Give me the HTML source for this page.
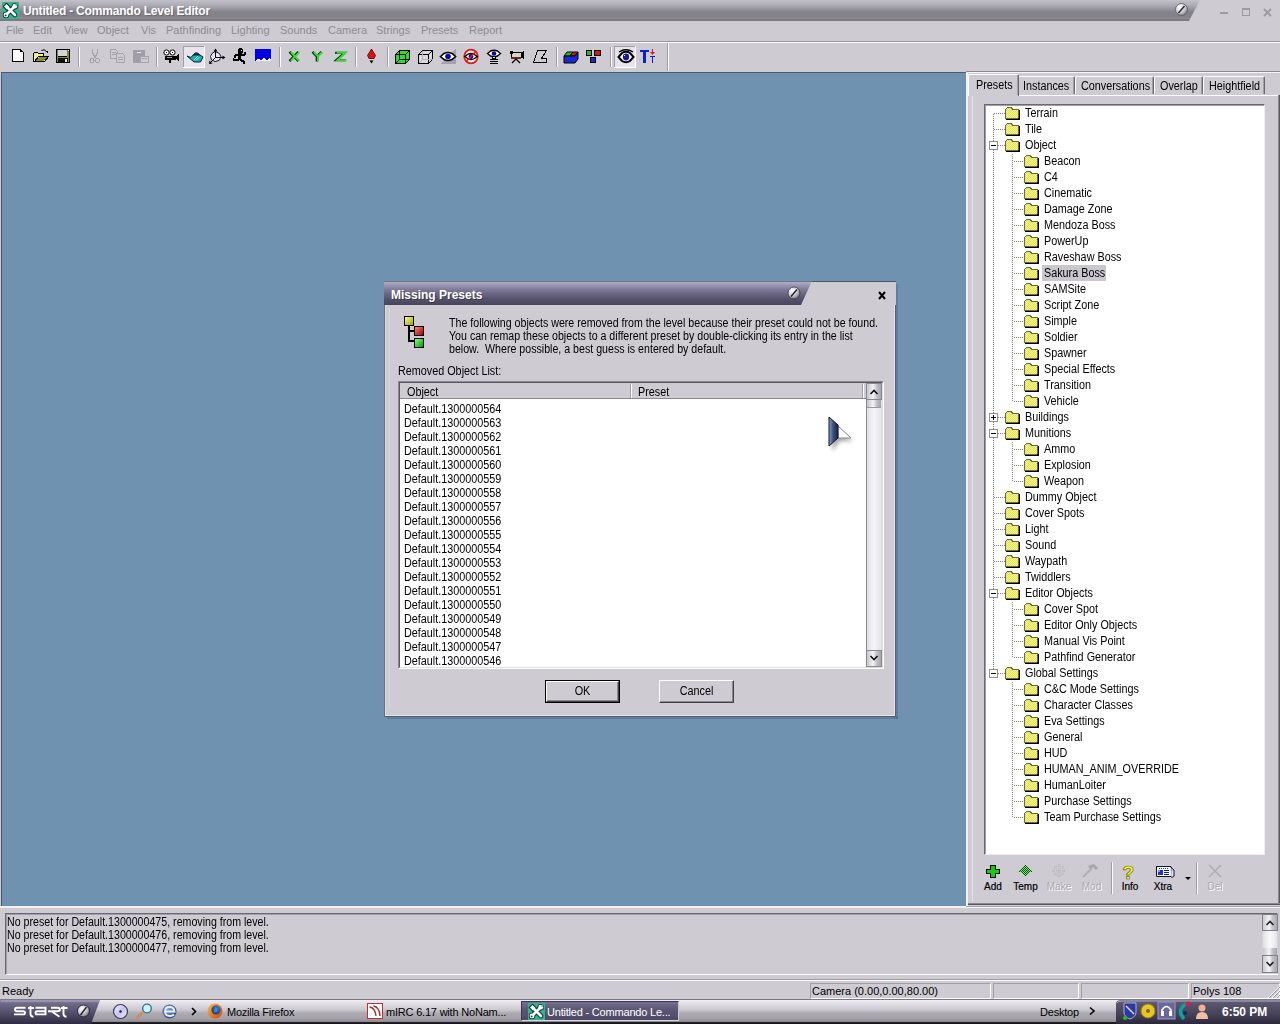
<!DOCTYPE html>
<html><head><meta charset="utf-8">
<style>
*{box-sizing:border-box}
html,body{margin:0;padding:0;width:1280px;height:1024px;overflow:hidden;background:#cecbd2;font-family:"Liberation Sans",sans-serif;font-size:11px;color:#000}
.a{position:absolute}
.t{position:absolute;white-space:nowrap;line-height:14px;font-size:12px;transform:scaleX(0.9);transform-origin:0 0}
.u{position:absolute;white-space:nowrap;line-height:14px;font-size:11px}
.m{position:absolute;top:23px;color:#8e8c94;white-space:nowrap;font-size:11px;line-height:14px}
.sep{position:absolute;top:47px;width:2px;height:20px;border-left:1px solid #a09ea6;border-right:1px solid #fff}
svg{position:absolute;overflow:visible}
</style></head><body>
<!-- TITLE BAR -->
<svg style="left:0;top:0" width="1210" height="21"><defs><linearGradient id="tg" x1="0" y1="0" x2="0" y2="1"><stop offset="0" stop-color="#c2c0c8"/><stop offset="0.25" stop-color="#aeacb4"/><stop offset="0.57" stop-color="#838189"/><stop offset="0.8" stop-color="#858389"/><stop offset="0.87" stop-color="#8c8a90"/><stop offset="0.94" stop-color="#7a7880"/><stop offset="1" stop-color="#7a7880"/></linearGradient></defs><polygon points="0,0 1200,0 1189,21 0,21" fill="url(#tg)"/></svg>
<svg style="left:2px;top:2px" width="17" height="17" viewBox="0 0 17 17"><rect width="17" height="17" fill="#36b290"/>
<g stroke="#0a3a30" stroke-width="4.6" stroke-linecap="round" fill="none"><path d="M4.5 12.5 L12.5 4.5 M5 5 L13 13"/></g>
<circle cx="4" cy="13" r="3.2" fill="#0a3a30"/><circle cx="12.8" cy="4.2" r="3.2" fill="#0a3a30"/><path d="M1.5 4.5 L4.5 1.5 L8 5 L5 8 Z" fill="#0a3a30" stroke="#0a3a30" stroke-width="1.6" stroke-linejoin="round"/>
<g stroke="#fff" stroke-width="2.6" stroke-linecap="round" fill="none"><path d="M4.5 12.5 L12.5 4.5 M5 5 L13 13"/></g>
<circle cx="4" cy="13" r="2.4" fill="#fff"/><circle cx="12.8" cy="4.2" r="2.4" fill="#fff"/><path d="M2 4.5 L4.5 2 L7.5 5 L5 7.5 Z" fill="#fff"/>
<circle cx="3.6" cy="13.4" r="0.9" fill="#0a3a30"/><path d="M13.5 3.5 L15.5 1.5" stroke="#36b290" stroke-width="1.6"/>
</svg>
<div class="u" style="left:23px;top:4px;font-size:12px;font-weight:bold;color:#fff;letter-spacing:-0.2px;line-height:15px;text-shadow:1px 1px 0 rgba(60,58,70,0.35)">Untitled - Commando Level Editor</div>
<svg style="left:1175px;top:3px" width="13" height="13"><defs><radialGradient id="scr" cx="0.35" cy="0.3" r="0.8"><stop offset="0" stop-color="#fff"/><stop offset="0.6" stop-color="#c8c8cc"/><stop offset="1" stop-color="#6a6870"/></radialGradient></defs><circle cx="6.5" cy="6.5" r="6" fill="url(#scr)" stroke="#58565e" stroke-width="0.8"/><path d="M3.5 10 L9.5 3" stroke="#2a2830" stroke-width="1.4"/></svg>
<div class="a" style="left:1220px;top:12px;width:8px;height:2px;background:#9c9aa2"></div>
<div class="a" style="left:1242px;top:8px;width:8px;height:8px;border:1px solid #9c9aa2;border-top-width:2px"></div>
<svg style="left:1263px;top:8px" width="9" height="9"><path d="M1 1 L8 8 M8 1 L1 8" stroke="#9c9aa2" stroke-width="1.8"/></svg>

<!-- MENU -->
<div class="m" style="left:6px">File</div>
<div class="m" style="left:33px">Edit</div>
<div class="m" style="left:64px">View</div>
<div class="m" style="left:97px">Object</div>
<div class="m" style="left:141px">Vis</div>
<div class="m" style="left:166px">Pathfinding</div>
<div class="m" style="left:231px">Lighting</div>
<div class="m" style="left:280px">Sounds</div>
<div class="m" style="left:328px">Camera</div>
<div class="m" style="left:376px">Strings</div>
<div class="m" style="left:421px">Presets</div>
<div class="m" style="left:469px">Report</div>
<div class="a" style="left:0;top:41px;width:1280px;height:1px;background:#9896a0"></div>
<div class="a" style="left:0;top:42px;width:1280px;height:1px;background:#fff"></div>

<!-- TOOLBAR -->
<svg style="left:0;top:43px" width="700" height="28" viewBox="0 43 700 28" shape-rendering="crispEdges">
<!-- new doc -->
<path d="M12.5 49.5 H20.5 L23.5 52.5 V61.5 H12.5 Z" fill="#fff" stroke="#000"/>
<rect x="20" y="50" width="2" height="2" fill="#000"/>
<!-- open -->
<path d="M33.5 52.5 H37.5 L38.5 53.5 H43.5 V56.5" fill="#f2ee8a" stroke="#000"/>
<rect x="34" y="54" width="9" height="7" fill="#f2ee8a"/>
<path d="M33.5 52.5 V61.5 H44.5 L48.5 56.5 H38.5 L34.5 61.5" fill="none" stroke="#000"/>
<path d="M35 61 L39 57 H47 L44 61 Z" fill="#8e8e1e"/>
<path d="M41.5 50.5 Q44 48.5 46.5 51.5" fill="none" stroke="#000" shape-rendering="auto"/>
<path d="M45 51 H48 V53 Z" fill="#000"/>
<!-- save -->
<rect x="56.5" y="49.5" width="13" height="13" fill="#7e8a2e" stroke="#000"/>
<rect x="58" y="50" width="9" height="6" fill="#d4d4dc"/>
<rect x="58" y="56" width="9" height="1" fill="#000"/>
<rect x="58" y="58" width="10" height="4" fill="#111"/>
<rect x="65" y="59" width="2" height="3" fill="#e8e8e0"/>
<rect x="68" y="50" width="1" height="1" fill="#fff"/>
<!-- sep -->
<rect x="78" y="47" width="1" height="20" fill="#a09ea6"/><rect x="79" y="47" width="1" height="20" fill="#fff"/>
<!-- cut disabled -->
<path d="M92.5 49 V53 L95 57 L97.5 53 V49" fill="none" stroke="#a4a2aa" stroke-width="1.2"/>
<circle cx="92" cy="60.5" r="2" fill="none" stroke="#a4a2aa" stroke-width="1.2"/>
<circle cx="97.5" cy="60.5" r="2" fill="none" stroke="#a4a2aa" stroke-width="1.2"/>
<path d="M94 58 L95 57 L96 58" stroke="#a4a2aa" fill="none"/>
<!-- copy disabled -->
<path d="M110.5 49.5 H115.5 L117.5 51.5 V58.5 H110.5 Z" fill="none" stroke="#a4a2aa"/>
<rect x="112" y="52" width="4" height="1" fill="#a4a2aa"/><rect x="112" y="54" width="4" height="1" fill="#a4a2aa"/>
<path d="M116.5 53.5 H122.5 L124.5 55.5 V62.5 H116.5 Z" fill="#cecbd2" stroke="#a4a2aa"/>
<rect x="118" y="57" width="5" height="1" fill="#a4a2aa"/><rect x="118" y="59" width="5" height="1" fill="#a4a2aa"/>
<!-- paste disabled -->
<rect x="133" y="50" width="12" height="13" fill="#a09ea8"/>
<rect x="137" y="52" width="4" height="1" fill="#e6e6ea"/>
<rect x="140.5" y="56.5" width="8" height="6" fill="#cecbd2" stroke="#a4a2aa"/>
<rect x="142" y="58" width="5" height="1" fill="#a4a2aa"/>
<!-- sep -->
<rect x="156" y="47" width="1" height="20" fill="#a09ea6"/><rect x="157" y="47" width="1" height="20" fill="#fff"/>
<!-- camera -->
<circle cx="166.5" cy="52.5" r="2.6" fill="#fff" stroke="#000" stroke-width="1" shape-rendering="auto"/>
<circle cx="172.5" cy="52.5" r="2.6" fill="#fff" stroke="#000" stroke-width="1" shape-rendering="auto"/>
<rect x="166" y="52" width="1" height="1" fill="#000"/><rect x="172" y="52" width="1" height="1" fill="#000"/>
<rect x="165" y="56" width="11" height="4" fill="#000"/>
<rect x="167" y="57" width="5" height="1" fill="#9a98a0"/>
<path d="M175 56 L178 55 V60 L175 59 Z" fill="#000"/><rect x="178" y="54" width="1" height="7" fill="#000"/>
<rect x="169" y="60" width="2" height="3" fill="#000"/>
<!-- teapot pressed -->
<rect x="183" y="46" width="22" height="22" fill="#e8e6ec"/>
<rect x="183" y="46" width="22" height="1" fill="#a09ea6"/><rect x="183" y="46" width="1" height="22" fill="#a09ea6"/>
<rect x="183" y="67" width="22" height="1" fill="#fff"/><rect x="204" y="46" width="1" height="22" fill="#fff"/>
<path d="M187 56 L191 57.5 L193 55 H200 L203 57 L200.5 62 H194 Z" fill="#28a8a8" stroke="#06283a" stroke-width="1" shape-rendering="auto"/>
<path d="M193.5 54.5 Q196 51 199.5 54.5 Z" fill="#1a3a7a" stroke="#06283a" stroke-width="1" shape-rendering="auto"/>
<path d="M194 60 L198 56 M196 60.5 L199.5 57" stroke="#70f0f0" stroke-width="1" shape-rendering="auto"/>
<!-- axis -->
<path d="M212 53.5 L215 51.5 L219.5 53.5 L221 57 L219 60.5 L215 61.5 L211.5 60 L210.5 56.5 Z" fill="#e8e6f0" stroke="#1a1a30" stroke-width="1" shape-rendering="auto"/>
<path d="M215.5 50 V57.5 H224 M215.5 57.5 L210 63" stroke="#000" stroke-width="1" fill="none" shape-rendering="auto"/>
<path d="M215.5 48.5 L213.5 51.5 H217.5 Z M225.5 57.5 L222.5 55.5 V59.5 Z M209 64 L209.5 60.5 L212.5 63.5 Z" fill="#000" shape-rendering="auto"/>
<!-- running man -->
<g fill="#000">
<rect x="238" y="49" width="5" height="4"/><rect x="239" y="48" width="3" height="6"/>
<rect x="238" y="53" width="3" height="7"/>
<rect x="235" y="54" width="10" height="2"/>
<rect x="234" y="55" width="2" height="3"/>
<rect x="244" y="52" width="2" height="3"/>
<rect x="233" y="59" width="6" height="2"/><rect x="233" y="58" width="1" height="2"/>
<rect x="240" y="59" width="2" height="2"/><rect x="241" y="60" width="3" height="2"/><rect x="243" y="61" width="2" height="3"/>
</g><rect x="241" y="50" width="1" height="1" fill="#fff"/>
<!-- blue shape -->
<path d="M255 49 H271 V59 L269 58 L267 60 L264 58 L261 60 L258 59 L255 61 Z" fill="#0000e0"/>
<path d="M255 61 L258 59 L261 60 L264 58 L267 60 L269 58 L271 59 V61 Z" fill="#f4f4f4"/>
<!-- sep -->
<rect x="279" y="47" width="1" height="20" fill="#a09ea6"/><rect x="280" y="47" width="1" height="20" fill="#fff"/>
<!-- X Y Z -->
<g fill="none" shape-rendering="auto" stroke-linecap="square">
<path d="M290.3 52.8 L297.5 60.2 M297.5 52.8 L290.3 60.2" stroke="#0a300a" stroke-width="2.4"/>
<path d="M291.5 52.8 L298.6 60.2 M298.6 52.8 L291.5 60.2" stroke="#3ad83a" stroke-width="2"/>
<path d="M313.3 52.8 L316.9 56.5 L320.5 52.8 M316.9 56.5 V60.2" stroke="#0a300a" stroke-width="2.4"/>
<path d="M314.5 52.8 L318 56.4 L321.6 52.8 M318 56.5 V60.2" stroke="#3ad83a" stroke-width="2"/>
<path d="M336.3 52.8 H344.5 L336.3 60.2 H344.5" stroke="#0a300a" stroke-width="2.3"/>
<path d="M337.5 52.8 H345.5 L337.5 60.2 H345.5" stroke="#3ad83a" stroke-width="1.9"/>
</g>
<!-- sep -->
<rect x="355" y="47" width="1" height="20" fill="#a09ea6"/><rect x="356" y="47" width="1" height="20" fill="#fff"/>
<!-- red drop -->
<path d="M371.5 49 L375.5 55.5 L374 58.5 H369 L367.5 55.5 Z" fill="#e01010" stroke="#400" stroke-width="0.8" shape-rendering="auto"/>
<path d="M369.5 60.5 H373.5 L371.5 63.5 Z" fill="#000" shape-rendering="auto"/>
<!-- sep -->
<rect x="387" y="47" width="1" height="20" fill="#a09ea6"/><rect x="388" y="47" width="1" height="20" fill="#fff"/>
<!-- green cube -->
<path d="M395.5 54.5 L399.5 50.5 H409.5 V59.5 L405.5 63.5 H395.5 Z" fill="#28e028" stroke="#000" stroke-width="1.2"/>
<path d="M395.5 54.5 H405.5 V63.5 M405.5 54.5 L409.5 50.5 M399.5 50.5 V59.5 H409.5 M399.5 59.5 L395.5 63.5" fill="none" stroke="#000" stroke-width="1"/>
<!-- white cube -->
<path d="M418.5 54.5 L422.5 50.5 H432.5 V59.5 L428.5 63.5 H418.5 Z" fill="#dcdae0" stroke="#000" stroke-width="1.2"/>
<path d="M418.5 54.5 H428.5 V63.5 M428.5 54.5 L432.5 50.5" fill="none" stroke="#000" stroke-width="1"/>
<path d="M422.5 50.5 V59.5 H432.5 M422.5 59.5 L418.5 63.5" fill="none" stroke="#b0b0b0" stroke-width="1"/>
<!-- eye gray triangle -->
<path d="M456 49 V64 H440 Z" fill="#a4a2aa"/>
<path d="M440.5 56.5 L444 53.5 Q448 51.5 452 53.5 L455.5 56.5 L452 59.5 Q448 61.5 444 59.5 Z" fill="#fff" stroke="#000" stroke-width="1.6" shape-rendering="auto"/>
<ellipse cx="448" cy="56.5" rx="2.8" ry="2.8" fill="#0a0aa8" shape-rendering="auto"/>
<!-- eye red circle -->
<circle cx="471" cy="56.5" r="6.8" fill="#f0f0f0" stroke="#e01818" stroke-width="1.8" shape-rendering="auto"/>
<path d="M465 56.5 L467.5 54.5 Q471 52.5 474.5 54.5 L477 56.5 L474.5 58.5 Q471 60.5 467.5 58.5 Z" fill="#fff" stroke="#000" stroke-width="1.4" shape-rendering="auto"/>
<ellipse cx="471" cy="56.5" rx="2.4" ry="2.4" fill="#0a0aa8" shape-rendering="auto"/>
<path d="M466.5 61 L475.5 52" stroke="#e01818" stroke-width="1.6" shape-rendering="auto"/>
<!-- eye stack -->
<path d="M487.5 53.5 L490.5 51 Q494 49.5 497.5 51 L500.5 53.5 L497.5 56 Q494 57.5 490.5 56 Z" fill="#fff" stroke="#000" stroke-width="1.4" shape-rendering="auto"/>
<ellipse cx="494" cy="53.5" rx="2.3" ry="2.3" fill="#0a0aa8" shape-rendering="auto"/>
<rect x="492" y="56" width="4" height="3" fill="#000"/><rect x="493" y="57" width="2" height="1" fill="#fff"/>
<rect x="490" y="59" width="8" height="1" fill="#000"/><rect x="490" y="61" width="8" height="1" fill="#000"/><rect x="490" y="63" width="8" height="1" fill="#000"/>
<!-- tripod camera -->
<rect x="511" y="52" width="10" height="5" fill="#d8d4c8" stroke="#000"/>
<rect x="510" y="51" width="3" height="3" fill="#000"/>
<path d="M521 53 L524 51 V59 L521 57 Z" fill="#000"/>
<rect x="511" y="57" width="10" height="2" fill="#6a2a1a"/>
<path d="M516 59 L512 63 M516 59 L520 63" stroke="#000" stroke-width="1.2" shape-rendering="auto"/>
<!-- Z outline -->
<path d="M537.5 50.5 H546.5 L541.5 58.5 H546.5 V62.5 H533.5 Z" fill="none" stroke="#000" stroke-width="1.1"/>
<!-- sep -->
<rect x="556" y="47" width="1" height="20" fill="#a09ea6"/><rect x="557" y="47" width="1" height="20" fill="#fff"/>
<!-- RGB cube -->
<path d="M564 56 L567 52 H573 L570 56 Z" fill="#20c020" stroke="#000" shape-rendering="auto"/>
<path d="M570 56 L573 52 H578 L575 56 Z" fill="#d01818" stroke="#000" shape-rendering="auto"/>
<path d="M564 56 H575 L578 52 V59 L575 63 H564 Z" fill="#1a2ad0" stroke="#000" shape-rendering="auto"/>
<!-- 3 squares -->
<rect x="586.5" y="50.5" width="5" height="5" fill="#20c020" stroke="#000"/>
<rect x="594.5" y="50.5" width="6" height="5" fill="#d01818" stroke="#000"/>
<rect x="590.5" y="57.5" width="5" height="5" fill="#1a2ad0" stroke="#000"/>
<!-- sep -->
<rect x="610" y="47" width="1" height="20" fill="#a09ea6"/><rect x="611" y="47" width="1" height="20" fill="#fff"/>
<!-- eye pressed -->
<rect x="614" y="46" width="22" height="22" fill="#e6e4ea"/>
<rect x="614" y="46" width="22" height="1" fill="#a09ea6"/><rect x="614" y="46" width="1" height="22" fill="#a09ea6"/>
<rect x="614" y="67" width="22" height="1" fill="#fff"/><rect x="635" y="46" width="1" height="22" fill="#fff"/>
<path d="M618.5 57 L622 53 Q626 50.5 630 53 L633.5 57 L630 61 Q626 63.5 622 61 Z" fill="#fff" stroke="#000" stroke-width="2" shape-rendering="auto"/>
<path d="M619 52 Q626 47.5 633 52" fill="none" stroke="#000" stroke-width="1.4" shape-rendering="auto"/>
<ellipse cx="626" cy="57" rx="3.2" ry="3.4" fill="#1a1aa0" shape-rendering="auto"/>
<rect x="624" y="55" width="1" height="1" fill="#fff"/>
<!-- T -->
<rect x="640" y="50" width="9" height="2" fill="#0a20d0"/><rect x="643" y="50" width="3" height="13" fill="#0a20d0"/>
<rect x="652" y="49" width="1" height="3" fill="#e01818"/><path d="M650 52 H655 L652.5 55 Z" fill="#e01818" shape-rendering="auto"/>
<rect x="650" y="56" width="5" height="1" fill="#0a20d0"/><rect x="652" y="56" width="1" height="7" fill="#0a20d0"/>
<!-- end line -->
<rect x="667" y="43" width="1" height="28" fill="#a09ea6"/><rect x="668" y="43" width="1" height="28" fill="#fff"/>
</svg>

<!-- VIEWPORT -->
<div class="a" style="left:1px;top:72px;width:965px;height:834px;border-left:1px solid #4e5a6a;border-top:1px solid #4e5a6a;background:#7092b1"></div>
<div class="a" style="left:0;top:906px;width:967px;height:2px;background:#f2f2f8"></div>
<!-- RIGHT PANEL -->
<div class="a" style="left:966px;top:71px;width:314px;height:836px;background:#cecbd2"></div>
<div class="a" style="left:966px;top:71px;width:314px;height:1px;background:#8a8890"></div>
<div class="a" style="left:966px;top:72px;width:314px;height:1px;background:#f6f6fa"></div>
<div class="a" style="left:966px;top:72px;width:2px;height:836px;background:#f2f2f8"></div>
<div class="a" style="left:966px;top:906px;width:314px;height:1px;background:#a4a2aa"></div>
<div class="a" style="left:966px;top:907px;width:314px;height:1px;background:#f6f6fa"></div>
<div class="a" style="left:968px;top:95px;width:312px;height:1px;background:#fff"></div>
<div class="a" style="left:972px;top:96px;width:1px;height:806px;background:#e4e2e8"></div>
<div class="a" style="left:1278px;top:95px;width:1px;height:809px;background:#8a8890"></div>
<div class="a" style="left:1279px;top:95px;width:1px;height:810px;background:#5a5860"></div>
<div class="a" style="left:968px;top:903px;width:312px;height:1px;background:#8a8890"></div>
<div class="a" style="left:968px;top:904px;width:312px;height:1px;background:#5a5860"></div>
<div class="a" style="left:1018px;top:76px;width:57px;height:18px;background:#cecbd2;border-left:1px solid #fff;border-top:1px solid #fff;border-right:1px solid #6a6870;border-radius:2px 2px 0 0"></div>
<div class="a" style="left:1073px;top:77px;width:1px;height:17px;background:#a09ea6"></div>
<div class="t" style="left:1023px;top:79px">Instances</div>
<div class="a" style="left:1075px;top:76px;width:79px;height:18px;background:#cecbd2;border-left:1px solid #fff;border-top:1px solid #fff;border-right:1px solid #6a6870;border-radius:2px 2px 0 0"></div>
<div class="a" style="left:1152px;top:77px;width:1px;height:17px;background:#a09ea6"></div>
<div class="t" style="left:1081px;top:79px">Conversations</div>
<div class="a" style="left:1154px;top:76px;width:49px;height:18px;background:#cecbd2;border-left:1px solid #fff;border-top:1px solid #fff;border-right:1px solid #6a6870;border-radius:2px 2px 0 0"></div>
<div class="a" style="left:1201px;top:77px;width:1px;height:17px;background:#a09ea6"></div>
<div class="t" style="left:1160px;top:79px">Overlap</div>
<div class="a" style="left:1203px;top:76px;width:62px;height:18px;background:#cecbd2;border-left:1px solid #fff;border-top:1px solid #fff;border-right:1px solid #6a6870;border-radius:2px 2px 0 0"></div>
<div class="a" style="left:1263px;top:77px;width:1px;height:17px;background:#a09ea6"></div>
<div class="t" style="left:1209px;top:79px">Heightfield</div>
<div class="a" style="left:968px;top:74px;width:51px;height:22px;background:#cecbd2;border-left:1px solid #fff;border-top:1px solid #fff;border-right:1px solid #6a6870;border-radius:2px 2px 0 0"></div>
<div class="a" style="left:1017px;top:75px;width:1px;height:20px;background:#a09ea6"></div>
<div class="t" style="left:976px;top:78px">Presets</div>
<div class="a" style="left:984px;top:104px;width:281px;height:751px;background:#fff;border-left:1px solid #6a6870;border-top:1px solid #6a6870;border-right:1px solid #f0eef4;border-bottom:1px solid #f0eef4"></div>
<div class="a" style="left:985px;top:105px;width:279px;height:749px;border-left:1px solid #a09ea6;border-top:1px solid #a09ea6"></div>
<svg style="left:984px;top:104px" width="280" height="751" viewBox="984 104 280 751" shape-rendering="crispEdges">
<defs><pattern id="dotv" width="1" height="2" patternUnits="userSpaceOnUse"><rect width="1" height="1" fill="#808080"/></pattern><pattern id="doth" width="2" height="1" patternUnits="userSpaceOnUse"><rect width="1" height="1" fill="#808080"/></pattern><pattern id="dith" width="2" height="2" patternUnits="userSpaceOnUse"><rect width="2" height="2" fill="#f4f490"/><rect width="1" height="1" fill="#e0e058"/><rect x="1" y="1" width="1" height="1" fill="#e0e058"/></pattern></defs>
<rect x="993" y="113" width="1" height="561" fill="url(#dotv)"/>
<rect x="1012" y="153" width="1" height="249" fill="url(#dotv)"/>
<rect x="1012" y="441" width="1" height="41" fill="url(#dotv)"/>
<rect x="1012" y="601" width="1" height="57" fill="url(#dotv)"/>
<rect x="1012" y="681" width="1" height="137" fill="url(#dotv)"/>
<rect x="994" y="113" width="11" height="1" fill="url(#doth)"/>
<g transform="translate(1005 107)"><path d="M0.5 3.5 Q0.5 1.5 2 1 L2.5 0.5 H5.5 Q6.5 0.5 7 1.5 L7.5 2.5 H12.5 Q13.5 2.5 13.5 3.5 V11.5 H0.5 Z" fill="url(#dith)" stroke="#6a6a38" stroke-width="1"/><rect x="14" y="3" width="1" height="10" fill="#000"/><rect x="1" y="12" width="14" height="1" fill="#000"/><rect x="13" y="11" width="1" height="1" fill="#000"/></g>
<rect x="994" y="129" width="11" height="1" fill="url(#doth)"/>
<g transform="translate(1005 123)"><path d="M0.5 3.5 Q0.5 1.5 2 1 L2.5 0.5 H5.5 Q6.5 0.5 7 1.5 L7.5 2.5 H12.5 Q13.5 2.5 13.5 3.5 V11.5 H0.5 Z" fill="url(#dith)" stroke="#6a6a38" stroke-width="1"/><rect x="14" y="3" width="1" height="10" fill="#000"/><rect x="1" y="12" width="14" height="1" fill="#000"/><rect x="13" y="11" width="1" height="1" fill="#000"/></g>
<rect x="994" y="145" width="11" height="1" fill="url(#doth)"/>
<g transform="translate(1005 139)"><path d="M0.5 3.5 Q0.5 1.5 2 1 L2.5 0.5 H5.5 Q6.5 0.5 7 1.5 L7.5 2.5 H12.5 Q13.5 2.5 13.5 3.5 V11.5 H0.5 Z" fill="url(#dith)" stroke="#6a6a38" stroke-width="1"/><rect x="14" y="3" width="1" height="10" fill="#000"/><rect x="1" y="12" width="14" height="1" fill="#000"/><rect x="13" y="11" width="1" height="1" fill="#000"/></g>
<rect x="989" y="141" width="9" height="9" fill="#fff"/><rect x="989.5" y="141.5" width="8" height="8" fill="none" stroke="#909090"/>
<rect x="991" y="145" width="5" height="1" fill="#000"/>
<rect x="1013" y="161" width="11" height="1" fill="url(#doth)"/>
<g transform="translate(1024 155)"><path d="M0.5 3.5 Q0.5 1.5 2 1 L2.5 0.5 H5.5 Q6.5 0.5 7 1.5 L7.5 2.5 H12.5 Q13.5 2.5 13.5 3.5 V11.5 H0.5 Z" fill="url(#dith)" stroke="#6a6a38" stroke-width="1"/><rect x="14" y="3" width="1" height="10" fill="#000"/><rect x="1" y="12" width="14" height="1" fill="#000"/><rect x="13" y="11" width="1" height="1" fill="#000"/></g>
<rect x="1013" y="177" width="11" height="1" fill="url(#doth)"/>
<g transform="translate(1024 171)"><path d="M0.5 3.5 Q0.5 1.5 2 1 L2.5 0.5 H5.5 Q6.5 0.5 7 1.5 L7.5 2.5 H12.5 Q13.5 2.5 13.5 3.5 V11.5 H0.5 Z" fill="url(#dith)" stroke="#6a6a38" stroke-width="1"/><rect x="14" y="3" width="1" height="10" fill="#000"/><rect x="1" y="12" width="14" height="1" fill="#000"/><rect x="13" y="11" width="1" height="1" fill="#000"/></g>
<rect x="1013" y="193" width="11" height="1" fill="url(#doth)"/>
<g transform="translate(1024 187)"><path d="M0.5 3.5 Q0.5 1.5 2 1 L2.5 0.5 H5.5 Q6.5 0.5 7 1.5 L7.5 2.5 H12.5 Q13.5 2.5 13.5 3.5 V11.5 H0.5 Z" fill="url(#dith)" stroke="#6a6a38" stroke-width="1"/><rect x="14" y="3" width="1" height="10" fill="#000"/><rect x="1" y="12" width="14" height="1" fill="#000"/><rect x="13" y="11" width="1" height="1" fill="#000"/></g>
<rect x="1013" y="209" width="11" height="1" fill="url(#doth)"/>
<g transform="translate(1024 203)"><path d="M0.5 3.5 Q0.5 1.5 2 1 L2.5 0.5 H5.5 Q6.5 0.5 7 1.5 L7.5 2.5 H12.5 Q13.5 2.5 13.5 3.5 V11.5 H0.5 Z" fill="url(#dith)" stroke="#6a6a38" stroke-width="1"/><rect x="14" y="3" width="1" height="10" fill="#000"/><rect x="1" y="12" width="14" height="1" fill="#000"/><rect x="13" y="11" width="1" height="1" fill="#000"/></g>
<rect x="1013" y="225" width="11" height="1" fill="url(#doth)"/>
<g transform="translate(1024 219)"><path d="M0.5 3.5 Q0.5 1.5 2 1 L2.5 0.5 H5.5 Q6.5 0.5 7 1.5 L7.5 2.5 H12.5 Q13.5 2.5 13.5 3.5 V11.5 H0.5 Z" fill="url(#dith)" stroke="#6a6a38" stroke-width="1"/><rect x="14" y="3" width="1" height="10" fill="#000"/><rect x="1" y="12" width="14" height="1" fill="#000"/><rect x="13" y="11" width="1" height="1" fill="#000"/></g>
<rect x="1013" y="241" width="11" height="1" fill="url(#doth)"/>
<g transform="translate(1024 235)"><path d="M0.5 3.5 Q0.5 1.5 2 1 L2.5 0.5 H5.5 Q6.5 0.5 7 1.5 L7.5 2.5 H12.5 Q13.5 2.5 13.5 3.5 V11.5 H0.5 Z" fill="url(#dith)" stroke="#6a6a38" stroke-width="1"/><rect x="14" y="3" width="1" height="10" fill="#000"/><rect x="1" y="12" width="14" height="1" fill="#000"/><rect x="13" y="11" width="1" height="1" fill="#000"/></g>
<rect x="1013" y="257" width="11" height="1" fill="url(#doth)"/>
<g transform="translate(1024 251)"><path d="M0.5 3.5 Q0.5 1.5 2 1 L2.5 0.5 H5.5 Q6.5 0.5 7 1.5 L7.5 2.5 H12.5 Q13.5 2.5 13.5 3.5 V11.5 H0.5 Z" fill="url(#dith)" stroke="#6a6a38" stroke-width="1"/><rect x="14" y="3" width="1" height="10" fill="#000"/><rect x="1" y="12" width="14" height="1" fill="#000"/><rect x="13" y="11" width="1" height="1" fill="#000"/></g>
<rect x="1013" y="273" width="11" height="1" fill="url(#doth)"/>
<g transform="translate(1024 267)"><path d="M0.5 3.5 Q0.5 1.5 2 1 L2.5 0.5 H5.5 Q6.5 0.5 7 1.5 L7.5 2.5 H12.5 Q13.5 2.5 13.5 3.5 V11.5 H0.5 Z" fill="url(#dith)" stroke="#6a6a38" stroke-width="1"/><rect x="14" y="3" width="1" height="10" fill="#000"/><rect x="1" y="12" width="14" height="1" fill="#000"/><rect x="13" y="11" width="1" height="1" fill="#000"/></g>
<rect x="1013" y="289" width="11" height="1" fill="url(#doth)"/>
<g transform="translate(1024 283)"><path d="M0.5 3.5 Q0.5 1.5 2 1 L2.5 0.5 H5.5 Q6.5 0.5 7 1.5 L7.5 2.5 H12.5 Q13.5 2.5 13.5 3.5 V11.5 H0.5 Z" fill="url(#dith)" stroke="#6a6a38" stroke-width="1"/><rect x="14" y="3" width="1" height="10" fill="#000"/><rect x="1" y="12" width="14" height="1" fill="#000"/><rect x="13" y="11" width="1" height="1" fill="#000"/></g>
<rect x="1013" y="305" width="11" height="1" fill="url(#doth)"/>
<g transform="translate(1024 299)"><path d="M0.5 3.5 Q0.5 1.5 2 1 L2.5 0.5 H5.5 Q6.5 0.5 7 1.5 L7.5 2.5 H12.5 Q13.5 2.5 13.5 3.5 V11.5 H0.5 Z" fill="url(#dith)" stroke="#6a6a38" stroke-width="1"/><rect x="14" y="3" width="1" height="10" fill="#000"/><rect x="1" y="12" width="14" height="1" fill="#000"/><rect x="13" y="11" width="1" height="1" fill="#000"/></g>
<rect x="1013" y="321" width="11" height="1" fill="url(#doth)"/>
<g transform="translate(1024 315)"><path d="M0.5 3.5 Q0.5 1.5 2 1 L2.5 0.5 H5.5 Q6.5 0.5 7 1.5 L7.5 2.5 H12.5 Q13.5 2.5 13.5 3.5 V11.5 H0.5 Z" fill="url(#dith)" stroke="#6a6a38" stroke-width="1"/><rect x="14" y="3" width="1" height="10" fill="#000"/><rect x="1" y="12" width="14" height="1" fill="#000"/><rect x="13" y="11" width="1" height="1" fill="#000"/></g>
<rect x="1013" y="337" width="11" height="1" fill="url(#doth)"/>
<g transform="translate(1024 331)"><path d="M0.5 3.5 Q0.5 1.5 2 1 L2.5 0.5 H5.5 Q6.5 0.5 7 1.5 L7.5 2.5 H12.5 Q13.5 2.5 13.5 3.5 V11.5 H0.5 Z" fill="url(#dith)" stroke="#6a6a38" stroke-width="1"/><rect x="14" y="3" width="1" height="10" fill="#000"/><rect x="1" y="12" width="14" height="1" fill="#000"/><rect x="13" y="11" width="1" height="1" fill="#000"/></g>
<rect x="1013" y="353" width="11" height="1" fill="url(#doth)"/>
<g transform="translate(1024 347)"><path d="M0.5 3.5 Q0.5 1.5 2 1 L2.5 0.5 H5.5 Q6.5 0.5 7 1.5 L7.5 2.5 H12.5 Q13.5 2.5 13.5 3.5 V11.5 H0.5 Z" fill="url(#dith)" stroke="#6a6a38" stroke-width="1"/><rect x="14" y="3" width="1" height="10" fill="#000"/><rect x="1" y="12" width="14" height="1" fill="#000"/><rect x="13" y="11" width="1" height="1" fill="#000"/></g>
<rect x="1013" y="369" width="11" height="1" fill="url(#doth)"/>
<g transform="translate(1024 363)"><path d="M0.5 3.5 Q0.5 1.5 2 1 L2.5 0.5 H5.5 Q6.5 0.5 7 1.5 L7.5 2.5 H12.5 Q13.5 2.5 13.5 3.5 V11.5 H0.5 Z" fill="url(#dith)" stroke="#6a6a38" stroke-width="1"/><rect x="14" y="3" width="1" height="10" fill="#000"/><rect x="1" y="12" width="14" height="1" fill="#000"/><rect x="13" y="11" width="1" height="1" fill="#000"/></g>
<rect x="1013" y="385" width="11" height="1" fill="url(#doth)"/>
<g transform="translate(1024 379)"><path d="M0.5 3.5 Q0.5 1.5 2 1 L2.5 0.5 H5.5 Q6.5 0.5 7 1.5 L7.5 2.5 H12.5 Q13.5 2.5 13.5 3.5 V11.5 H0.5 Z" fill="url(#dith)" stroke="#6a6a38" stroke-width="1"/><rect x="14" y="3" width="1" height="10" fill="#000"/><rect x="1" y="12" width="14" height="1" fill="#000"/><rect x="13" y="11" width="1" height="1" fill="#000"/></g>
<rect x="1013" y="401" width="11" height="1" fill="url(#doth)"/>
<g transform="translate(1024 395)"><path d="M0.5 3.5 Q0.5 1.5 2 1 L2.5 0.5 H5.5 Q6.5 0.5 7 1.5 L7.5 2.5 H12.5 Q13.5 2.5 13.5 3.5 V11.5 H0.5 Z" fill="url(#dith)" stroke="#6a6a38" stroke-width="1"/><rect x="14" y="3" width="1" height="10" fill="#000"/><rect x="1" y="12" width="14" height="1" fill="#000"/><rect x="13" y="11" width="1" height="1" fill="#000"/></g>
<rect x="994" y="417" width="11" height="1" fill="url(#doth)"/>
<g transform="translate(1005 411)"><path d="M0.5 3.5 Q0.5 1.5 2 1 L2.5 0.5 H5.5 Q6.5 0.5 7 1.5 L7.5 2.5 H12.5 Q13.5 2.5 13.5 3.5 V11.5 H0.5 Z" fill="url(#dith)" stroke="#6a6a38" stroke-width="1"/><rect x="14" y="3" width="1" height="10" fill="#000"/><rect x="1" y="12" width="14" height="1" fill="#000"/><rect x="13" y="11" width="1" height="1" fill="#000"/></g>
<rect x="989" y="413" width="9" height="9" fill="#fff"/><rect x="989.5" y="413.5" width="8" height="8" fill="none" stroke="#909090"/>
<rect x="991" y="417" width="5" height="1" fill="#000"/>
<rect x="993" y="415" width="1" height="5" fill="#000"/>
<rect x="994" y="433" width="11" height="1" fill="url(#doth)"/>
<g transform="translate(1005 427)"><path d="M0.5 3.5 Q0.5 1.5 2 1 L2.5 0.5 H5.5 Q6.5 0.5 7 1.5 L7.5 2.5 H12.5 Q13.5 2.5 13.5 3.5 V11.5 H0.5 Z" fill="url(#dith)" stroke="#6a6a38" stroke-width="1"/><rect x="14" y="3" width="1" height="10" fill="#000"/><rect x="1" y="12" width="14" height="1" fill="#000"/><rect x="13" y="11" width="1" height="1" fill="#000"/></g>
<rect x="989" y="429" width="9" height="9" fill="#fff"/><rect x="989.5" y="429.5" width="8" height="8" fill="none" stroke="#909090"/>
<rect x="991" y="433" width="5" height="1" fill="#000"/>
<rect x="1013" y="449" width="11" height="1" fill="url(#doth)"/>
<g transform="translate(1024 443)"><path d="M0.5 3.5 Q0.5 1.5 2 1 L2.5 0.5 H5.5 Q6.5 0.5 7 1.5 L7.5 2.5 H12.5 Q13.5 2.5 13.5 3.5 V11.5 H0.5 Z" fill="url(#dith)" stroke="#6a6a38" stroke-width="1"/><rect x="14" y="3" width="1" height="10" fill="#000"/><rect x="1" y="12" width="14" height="1" fill="#000"/><rect x="13" y="11" width="1" height="1" fill="#000"/></g>
<rect x="1013" y="465" width="11" height="1" fill="url(#doth)"/>
<g transform="translate(1024 459)"><path d="M0.5 3.5 Q0.5 1.5 2 1 L2.5 0.5 H5.5 Q6.5 0.5 7 1.5 L7.5 2.5 H12.5 Q13.5 2.5 13.5 3.5 V11.5 H0.5 Z" fill="url(#dith)" stroke="#6a6a38" stroke-width="1"/><rect x="14" y="3" width="1" height="10" fill="#000"/><rect x="1" y="12" width="14" height="1" fill="#000"/><rect x="13" y="11" width="1" height="1" fill="#000"/></g>
<rect x="1013" y="481" width="11" height="1" fill="url(#doth)"/>
<g transform="translate(1024 475)"><path d="M0.5 3.5 Q0.5 1.5 2 1 L2.5 0.5 H5.5 Q6.5 0.5 7 1.5 L7.5 2.5 H12.5 Q13.5 2.5 13.5 3.5 V11.5 H0.5 Z" fill="url(#dith)" stroke="#6a6a38" stroke-width="1"/><rect x="14" y="3" width="1" height="10" fill="#000"/><rect x="1" y="12" width="14" height="1" fill="#000"/><rect x="13" y="11" width="1" height="1" fill="#000"/></g>
<rect x="994" y="497" width="11" height="1" fill="url(#doth)"/>
<g transform="translate(1005 491)"><path d="M0.5 3.5 Q0.5 1.5 2 1 L2.5 0.5 H5.5 Q6.5 0.5 7 1.5 L7.5 2.5 H12.5 Q13.5 2.5 13.5 3.5 V11.5 H0.5 Z" fill="url(#dith)" stroke="#6a6a38" stroke-width="1"/><rect x="14" y="3" width="1" height="10" fill="#000"/><rect x="1" y="12" width="14" height="1" fill="#000"/><rect x="13" y="11" width="1" height="1" fill="#000"/></g>
<rect x="994" y="513" width="11" height="1" fill="url(#doth)"/>
<g transform="translate(1005 507)"><path d="M0.5 3.5 Q0.5 1.5 2 1 L2.5 0.5 H5.5 Q6.5 0.5 7 1.5 L7.5 2.5 H12.5 Q13.5 2.5 13.5 3.5 V11.5 H0.5 Z" fill="url(#dith)" stroke="#6a6a38" stroke-width="1"/><rect x="14" y="3" width="1" height="10" fill="#000"/><rect x="1" y="12" width="14" height="1" fill="#000"/><rect x="13" y="11" width="1" height="1" fill="#000"/></g>
<rect x="994" y="529" width="11" height="1" fill="url(#doth)"/>
<g transform="translate(1005 523)"><path d="M0.5 3.5 Q0.5 1.5 2 1 L2.5 0.5 H5.5 Q6.5 0.5 7 1.5 L7.5 2.5 H12.5 Q13.5 2.5 13.5 3.5 V11.5 H0.5 Z" fill="url(#dith)" stroke="#6a6a38" stroke-width="1"/><rect x="14" y="3" width="1" height="10" fill="#000"/><rect x="1" y="12" width="14" height="1" fill="#000"/><rect x="13" y="11" width="1" height="1" fill="#000"/></g>
<rect x="994" y="545" width="11" height="1" fill="url(#doth)"/>
<g transform="translate(1005 539)"><path d="M0.5 3.5 Q0.5 1.5 2 1 L2.5 0.5 H5.5 Q6.5 0.5 7 1.5 L7.5 2.5 H12.5 Q13.5 2.5 13.5 3.5 V11.5 H0.5 Z" fill="url(#dith)" stroke="#6a6a38" stroke-width="1"/><rect x="14" y="3" width="1" height="10" fill="#000"/><rect x="1" y="12" width="14" height="1" fill="#000"/><rect x="13" y="11" width="1" height="1" fill="#000"/></g>
<rect x="994" y="561" width="11" height="1" fill="url(#doth)"/>
<g transform="translate(1005 555)"><path d="M0.5 3.5 Q0.5 1.5 2 1 L2.5 0.5 H5.5 Q6.5 0.5 7 1.5 L7.5 2.5 H12.5 Q13.5 2.5 13.5 3.5 V11.5 H0.5 Z" fill="url(#dith)" stroke="#6a6a38" stroke-width="1"/><rect x="14" y="3" width="1" height="10" fill="#000"/><rect x="1" y="12" width="14" height="1" fill="#000"/><rect x="13" y="11" width="1" height="1" fill="#000"/></g>
<rect x="994" y="577" width="11" height="1" fill="url(#doth)"/>
<g transform="translate(1005 571)"><path d="M0.5 3.5 Q0.5 1.5 2 1 L2.5 0.5 H5.5 Q6.5 0.5 7 1.5 L7.5 2.5 H12.5 Q13.5 2.5 13.5 3.5 V11.5 H0.5 Z" fill="url(#dith)" stroke="#6a6a38" stroke-width="1"/><rect x="14" y="3" width="1" height="10" fill="#000"/><rect x="1" y="12" width="14" height="1" fill="#000"/><rect x="13" y="11" width="1" height="1" fill="#000"/></g>
<rect x="994" y="593" width="11" height="1" fill="url(#doth)"/>
<g transform="translate(1005 587)"><path d="M0.5 3.5 Q0.5 1.5 2 1 L2.5 0.5 H5.5 Q6.5 0.5 7 1.5 L7.5 2.5 H12.5 Q13.5 2.5 13.5 3.5 V11.5 H0.5 Z" fill="url(#dith)" stroke="#6a6a38" stroke-width="1"/><rect x="14" y="3" width="1" height="10" fill="#000"/><rect x="1" y="12" width="14" height="1" fill="#000"/><rect x="13" y="11" width="1" height="1" fill="#000"/></g>
<rect x="989" y="589" width="9" height="9" fill="#fff"/><rect x="989.5" y="589.5" width="8" height="8" fill="none" stroke="#909090"/>
<rect x="991" y="593" width="5" height="1" fill="#000"/>
<rect x="1013" y="609" width="11" height="1" fill="url(#doth)"/>
<g transform="translate(1024 603)"><path d="M0.5 3.5 Q0.5 1.5 2 1 L2.5 0.5 H5.5 Q6.5 0.5 7 1.5 L7.5 2.5 H12.5 Q13.5 2.5 13.5 3.5 V11.5 H0.5 Z" fill="url(#dith)" stroke="#6a6a38" stroke-width="1"/><rect x="14" y="3" width="1" height="10" fill="#000"/><rect x="1" y="12" width="14" height="1" fill="#000"/><rect x="13" y="11" width="1" height="1" fill="#000"/></g>
<rect x="1013" y="625" width="11" height="1" fill="url(#doth)"/>
<g transform="translate(1024 619)"><path d="M0.5 3.5 Q0.5 1.5 2 1 L2.5 0.5 H5.5 Q6.5 0.5 7 1.5 L7.5 2.5 H12.5 Q13.5 2.5 13.5 3.5 V11.5 H0.5 Z" fill="url(#dith)" stroke="#6a6a38" stroke-width="1"/><rect x="14" y="3" width="1" height="10" fill="#000"/><rect x="1" y="12" width="14" height="1" fill="#000"/><rect x="13" y="11" width="1" height="1" fill="#000"/></g>
<rect x="1013" y="641" width="11" height="1" fill="url(#doth)"/>
<g transform="translate(1024 635)"><path d="M0.5 3.5 Q0.5 1.5 2 1 L2.5 0.5 H5.5 Q6.5 0.5 7 1.5 L7.5 2.5 H12.5 Q13.5 2.5 13.5 3.5 V11.5 H0.5 Z" fill="url(#dith)" stroke="#6a6a38" stroke-width="1"/><rect x="14" y="3" width="1" height="10" fill="#000"/><rect x="1" y="12" width="14" height="1" fill="#000"/><rect x="13" y="11" width="1" height="1" fill="#000"/></g>
<rect x="1013" y="657" width="11" height="1" fill="url(#doth)"/>
<g transform="translate(1024 651)"><path d="M0.5 3.5 Q0.5 1.5 2 1 L2.5 0.5 H5.5 Q6.5 0.5 7 1.5 L7.5 2.5 H12.5 Q13.5 2.5 13.5 3.5 V11.5 H0.5 Z" fill="url(#dith)" stroke="#6a6a38" stroke-width="1"/><rect x="14" y="3" width="1" height="10" fill="#000"/><rect x="1" y="12" width="14" height="1" fill="#000"/><rect x="13" y="11" width="1" height="1" fill="#000"/></g>
<rect x="994" y="673" width="11" height="1" fill="url(#doth)"/>
<g transform="translate(1005 667)"><path d="M0.5 3.5 Q0.5 1.5 2 1 L2.5 0.5 H5.5 Q6.5 0.5 7 1.5 L7.5 2.5 H12.5 Q13.5 2.5 13.5 3.5 V11.5 H0.5 Z" fill="url(#dith)" stroke="#6a6a38" stroke-width="1"/><rect x="14" y="3" width="1" height="10" fill="#000"/><rect x="1" y="12" width="14" height="1" fill="#000"/><rect x="13" y="11" width="1" height="1" fill="#000"/></g>
<rect x="989" y="669" width="9" height="9" fill="#fff"/><rect x="989.5" y="669.5" width="8" height="8" fill="none" stroke="#909090"/>
<rect x="991" y="673" width="5" height="1" fill="#000"/>
<rect x="1013" y="689" width="11" height="1" fill="url(#doth)"/>
<g transform="translate(1024 683)"><path d="M0.5 3.5 Q0.5 1.5 2 1 L2.5 0.5 H5.5 Q6.5 0.5 7 1.5 L7.5 2.5 H12.5 Q13.5 2.5 13.5 3.5 V11.5 H0.5 Z" fill="url(#dith)" stroke="#6a6a38" stroke-width="1"/><rect x="14" y="3" width="1" height="10" fill="#000"/><rect x="1" y="12" width="14" height="1" fill="#000"/><rect x="13" y="11" width="1" height="1" fill="#000"/></g>
<rect x="1013" y="705" width="11" height="1" fill="url(#doth)"/>
<g transform="translate(1024 699)"><path d="M0.5 3.5 Q0.5 1.5 2 1 L2.5 0.5 H5.5 Q6.5 0.5 7 1.5 L7.5 2.5 H12.5 Q13.5 2.5 13.5 3.5 V11.5 H0.5 Z" fill="url(#dith)" stroke="#6a6a38" stroke-width="1"/><rect x="14" y="3" width="1" height="10" fill="#000"/><rect x="1" y="12" width="14" height="1" fill="#000"/><rect x="13" y="11" width="1" height="1" fill="#000"/></g>
<rect x="1013" y="721" width="11" height="1" fill="url(#doth)"/>
<g transform="translate(1024 715)"><path d="M0.5 3.5 Q0.5 1.5 2 1 L2.5 0.5 H5.5 Q6.5 0.5 7 1.5 L7.5 2.5 H12.5 Q13.5 2.5 13.5 3.5 V11.5 H0.5 Z" fill="url(#dith)" stroke="#6a6a38" stroke-width="1"/><rect x="14" y="3" width="1" height="10" fill="#000"/><rect x="1" y="12" width="14" height="1" fill="#000"/><rect x="13" y="11" width="1" height="1" fill="#000"/></g>
<rect x="1013" y="737" width="11" height="1" fill="url(#doth)"/>
<g transform="translate(1024 731)"><path d="M0.5 3.5 Q0.5 1.5 2 1 L2.5 0.5 H5.5 Q6.5 0.5 7 1.5 L7.5 2.5 H12.5 Q13.5 2.5 13.5 3.5 V11.5 H0.5 Z" fill="url(#dith)" stroke="#6a6a38" stroke-width="1"/><rect x="14" y="3" width="1" height="10" fill="#000"/><rect x="1" y="12" width="14" height="1" fill="#000"/><rect x="13" y="11" width="1" height="1" fill="#000"/></g>
<rect x="1013" y="753" width="11" height="1" fill="url(#doth)"/>
<g transform="translate(1024 747)"><path d="M0.5 3.5 Q0.5 1.5 2 1 L2.5 0.5 H5.5 Q6.5 0.5 7 1.5 L7.5 2.5 H12.5 Q13.5 2.5 13.5 3.5 V11.5 H0.5 Z" fill="url(#dith)" stroke="#6a6a38" stroke-width="1"/><rect x="14" y="3" width="1" height="10" fill="#000"/><rect x="1" y="12" width="14" height="1" fill="#000"/><rect x="13" y="11" width="1" height="1" fill="#000"/></g>
<rect x="1013" y="769" width="11" height="1" fill="url(#doth)"/>
<g transform="translate(1024 763)"><path d="M0.5 3.5 Q0.5 1.5 2 1 L2.5 0.5 H5.5 Q6.5 0.5 7 1.5 L7.5 2.5 H12.5 Q13.5 2.5 13.5 3.5 V11.5 H0.5 Z" fill="url(#dith)" stroke="#6a6a38" stroke-width="1"/><rect x="14" y="3" width="1" height="10" fill="#000"/><rect x="1" y="12" width="14" height="1" fill="#000"/><rect x="13" y="11" width="1" height="1" fill="#000"/></g>
<rect x="1013" y="785" width="11" height="1" fill="url(#doth)"/>
<g transform="translate(1024 779)"><path d="M0.5 3.5 Q0.5 1.5 2 1 L2.5 0.5 H5.5 Q6.5 0.5 7 1.5 L7.5 2.5 H12.5 Q13.5 2.5 13.5 3.5 V11.5 H0.5 Z" fill="url(#dith)" stroke="#6a6a38" stroke-width="1"/><rect x="14" y="3" width="1" height="10" fill="#000"/><rect x="1" y="12" width="14" height="1" fill="#000"/><rect x="13" y="11" width="1" height="1" fill="#000"/></g>
<rect x="1013" y="801" width="11" height="1" fill="url(#doth)"/>
<g transform="translate(1024 795)"><path d="M0.5 3.5 Q0.5 1.5 2 1 L2.5 0.5 H5.5 Q6.5 0.5 7 1.5 L7.5 2.5 H12.5 Q13.5 2.5 13.5 3.5 V11.5 H0.5 Z" fill="url(#dith)" stroke="#6a6a38" stroke-width="1"/><rect x="14" y="3" width="1" height="10" fill="#000"/><rect x="1" y="12" width="14" height="1" fill="#000"/><rect x="13" y="11" width="1" height="1" fill="#000"/></g>
<rect x="1013" y="817" width="11" height="1" fill="url(#doth)"/>
<g transform="translate(1024 811)"><path d="M0.5 3.5 Q0.5 1.5 2 1 L2.5 0.5 H5.5 Q6.5 0.5 7 1.5 L7.5 2.5 H12.5 Q13.5 2.5 13.5 3.5 V11.5 H0.5 Z" fill="url(#dith)" stroke="#6a6a38" stroke-width="1"/><rect x="14" y="3" width="1" height="10" fill="#000"/><rect x="1" y="12" width="14" height="1" fill="#000"/><rect x="13" y="11" width="1" height="1" fill="#000"/></g>
</svg>
<div class="t" style="left:1025px;top:106px">Terrain</div>
<div class="t" style="left:1025px;top:122px">Tile</div>
<div class="t" style="left:1025px;top:138px">Object</div>
<div class="t" style="left:1044px;top:154px">Beacon</div>
<div class="t" style="left:1044px;top:170px">C4</div>
<div class="t" style="left:1044px;top:186px">Cinematic</div>
<div class="t" style="left:1044px;top:202px">Damage Zone</div>
<div class="t" style="left:1044px;top:218px">Mendoza Boss</div>
<div class="t" style="left:1044px;top:234px">PowerUp</div>
<div class="t" style="left:1044px;top:250px">Raveshaw Boss</div>
<div class="a" style="left:1042px;top:265px;width:64px;height:16px;background:#cac8ce"></div>
<div class="t" style="left:1044px;top:266px">Sakura Boss</div>
<div class="t" style="left:1044px;top:282px">SAMSite</div>
<div class="t" style="left:1044px;top:298px">Script Zone</div>
<div class="t" style="left:1044px;top:314px">Simple</div>
<div class="t" style="left:1044px;top:330px">Soldier</div>
<div class="t" style="left:1044px;top:346px">Spawner</div>
<div class="t" style="left:1044px;top:362px">Special Effects</div>
<div class="t" style="left:1044px;top:378px">Transition</div>
<div class="t" style="left:1044px;top:394px">Vehicle</div>
<div class="t" style="left:1025px;top:410px">Buildings</div>
<div class="t" style="left:1025px;top:426px">Munitions</div>
<div class="t" style="left:1044px;top:442px">Ammo</div>
<div class="t" style="left:1044px;top:458px">Explosion</div>
<div class="t" style="left:1044px;top:474px">Weapon</div>
<div class="t" style="left:1025px;top:490px">Dummy Object</div>
<div class="t" style="left:1025px;top:506px">Cover Spots</div>
<div class="t" style="left:1025px;top:522px">Light</div>
<div class="t" style="left:1025px;top:538px">Sound</div>
<div class="t" style="left:1025px;top:554px">Waypath</div>
<div class="t" style="left:1025px;top:570px">Twiddlers</div>
<div class="t" style="left:1025px;top:586px">Editor Objects</div>
<div class="t" style="left:1044px;top:602px">Cover Spot</div>
<div class="t" style="left:1044px;top:618px">Editor Only Objects</div>
<div class="t" style="left:1044px;top:634px">Manual Vis Point</div>
<div class="t" style="left:1044px;top:650px">Pathfind Generator</div>
<div class="t" style="left:1025px;top:666px">Global Settings</div>
<div class="t" style="left:1044px;top:682px">C&amp;C Mode Settings</div>
<div class="t" style="left:1044px;top:698px">Character Classes</div>
<div class="t" style="left:1044px;top:714px">Eva Settings</div>
<div class="t" style="left:1044px;top:730px">General</div>
<div class="t" style="left:1044px;top:746px">HUD</div>
<div class="t" style="left:1044px;top:762px">HUMAN_ANIM_OVERRIDE</div>
<div class="t" style="left:1044px;top:778px">HumanLoiter</div>
<div class="t" style="left:1044px;top:794px">Purchase Settings</div>
<div class="t" style="left:1044px;top:810px">Team Purchase Settings</div>
<div class="a" style="left:1111px;top:862px;width:1px;height:32px;background:#a09ea6"></div><div class="a" style="left:1112px;top:862px;width:1px;height:32px;background:#fff"></div>
<div class="a" style="left:1196px;top:862px;width:1px;height:32px;background:#a09ea6"></div><div class="a" style="left:1197px;top:862px;width:1px;height:32px;background:#fff"></div>
<div class="u" style="left:963px;top:880px;width:60px;text-align:center;font-size:10px;color:#000;-webkit-text-stroke:0.2px #000">Add</div>
<div class="u" style="left:995.5px;top:880px;width:60px;text-align:center;font-size:10px;color:#000;-webkit-text-stroke:0.2px #000">Temp</div>
<div class="u" style="left:1030px;top:881px;width:60px;text-align:center;font-size:10px;color:#fff">Make</div>
<div class="u" style="left:1029px;top:880px;width:60px;text-align:center;font-size:10px;color:#aaa8b0">Make</div>
<div class="u" style="left:1062.5px;top:881px;width:60px;text-align:center;font-size:10px;color:#fff">Mod</div>
<div class="u" style="left:1061.5px;top:880px;width:60px;text-align:center;font-size:10px;color:#aaa8b0">Mod</div>
<div class="u" style="left:1100px;top:880px;width:60px;text-align:center;font-size:10px;color:#000;-webkit-text-stroke:0.2px #000">Info</div>
<div class="u" style="left:1133px;top:880px;width:60px;text-align:center;font-size:10px;color:#000;-webkit-text-stroke:0.2px #000">Xtra</div>
<div class="u" style="left:1186px;top:881px;width:60px;text-align:center;font-size:10px;color:#fff">Del</div>
<div class="u" style="left:1185px;top:880px;width:60px;text-align:center;font-size:10px;color:#aaa8b0">Del</div>
<svg style="left:980px;top:860px" width="250" height="22" viewBox="980 860 250 22">
<path d="M990.5 865.5 H995.5 V869.5 H999.5 V873.5 H995.5 V877.5 H990.5 V873.5 H986.5 V869.5 H990.5 Z" fill="#10d010" stroke="#000" shape-rendering="crispEdges"/>
<defs><pattern id="gdith" width="2" height="2" patternUnits="userSpaceOnUse"><rect width="2" height="2" fill="#80e880"/><rect width="1" height="1" fill="#1a4a1a"/><rect x="1" y="1" width="1" height="1" fill="#1a4a1a"/></pattern></defs><path d="M1025.5 864.5 L1028 868 L1032.5 871 L1028 874 L1025.5 877.5 L1023 874 L1018.5 871 L1023 868 Z" fill="url(#gdith)" shape-rendering="crispEdges"/>
<g stroke="#b4b2ba" stroke-width="1" fill="none" stroke-dasharray="1 1"><circle cx="1059" cy="871" r="5"/><path d="M1052 871 H1066 M1059 864 V878 M1054 866 L1064 876 M1064 866 L1054 876"/></g>
<path d="M1083 877 L1092 868" stroke="#b0aeb6" stroke-width="2"/><path d="M1088 866 L1094 864 L1098 868 L1096 870 L1093 867 L1090 869 Z" fill="#a8a6ae"/>
<text x="1122.5" y="879" font-family="Liberation Sans" font-weight="bold" font-size="19" fill="#ffff30" stroke="#6a6a00" stroke-width="0.7">?</text>
<path d="M1156.5 866.5 H1170.5 L1171.5 868 V876.5 H1157.5 Q1156.5 876.5 1156.5 875.5 Z" fill="#f4f6ff" stroke="#101830" stroke-width="1.1"/>
<path d="M1159 868.5 H1169" stroke="#2040c0" stroke-width="1" stroke-dasharray="1 1"/>
<rect x="1158" y="870" width="5" height="5" fill="#1838c0"/><rect x="1158" y="870" width="2" height="2" fill="#80a0ff"/>
<rect x="1164" y="870" width="5" height="1" fill="#102090"/><rect x="1164" y="872" width="5" height="1" fill="#102090"/><rect x="1164" y="874" width="5" height="1" fill="#102090"/>
<path d="M1171.5 868 L1174 870 V876 Q1174 877 1172.5 877 H1171" fill="#e0e4f0" stroke="#101830" stroke-width="1"/>
<path d="M1185 877 H1191 L1188 880 Z" fill="#000"/>
<path d="M1209 865 L1221 877 M1221 865 L1209 877" stroke="#b0aeb6" stroke-width="1.6"/>
</svg>
<!-- OUTPUT -->
<div class="a" style="left:5px;top:913px;width:1273px;height:62px;background:#cecbd2;border-left:1px solid #6a6870;border-top:1px solid #6a6870;border-right:1px solid #fff;border-bottom:1px solid #fff"></div>
<div class="a" style="left:6px;top:914px;width:1271px;height:60px;border-left:1px solid #a09ea6;border-top:1px solid #a09ea6"></div>
<div class="t" style="left:7px;top:915px;transform:scaleX(0.886)">No preset for Default.1300000475, removing from level.</div>
<div class="t" style="left:7px;top:928px;transform:scaleX(0.886)">No preset for Default.1300000476, removing from level.</div>
<div class="t" style="left:7px;top:941px;transform:scaleX(0.886)">No preset for Default.1300000477, removing from level.</div>
<svg style="left:1262px;top:914px" width="16" height="60" viewBox="1262 914 16 60">
<defs><linearGradient id="sbb" x1="0" y1="0" x2="1" y2="0"><stop offset="0" stop-color="#c8c6cc"/><stop offset="0.45" stop-color="#f4f4f6"/><stop offset="0.7" stop-color="#c0bec6"/><stop offset="1" stop-color="#a8a6ae"/></linearGradient>
<linearGradient id="sbt" x1="0" y1="0" x2="1" y2="0"><stop offset="0" stop-color="#e0e0e4"/><stop offset="0.5" stop-color="#fafafc"/><stop offset="1" stop-color="#e4e4e8"/></linearGradient></defs>
<rect x="1262" y="914" width="16" height="60" fill="#d4d2d8"/>
<rect x="1262.5" y="914.5" width="15" height="16" fill="url(#sbb)" stroke="#808088"/>
<rect x="1263" y="931" width="14" height="17" fill="url(#sbt)"/>
<rect x="1263" y="948" width="14" height="7" fill="url(#sbb)"/>
<rect x="1262.5" y="955.5" width="15" height="17" fill="url(#sbb)" stroke="#808088"/>
<path d="M1266.5 925 L1270 921.5 L1273.5 925" fill="none" stroke="#202028" stroke-width="1.6"/>
<path d="M1266.5 962 L1270 965.5 L1273.5 962" fill="none" stroke="#202028" stroke-width="1.6"/>
</svg>
<div class="a" style="left:0;top:979px;width:1280px;height:1px;background:#a09ea6"></div>
<div class="a" style="left:0;top:980px;width:1280px;height:1px;background:#fff"></div>
<div class="u" style="left:2px;top:984px">Ready</div>
<div class="a" style="left:810px;top:983px;width:181px;height:16px;border-left:1px solid #a09ea6;border-top:1px solid #a09ea6;border-right:1px solid #fff;border-bottom:1px solid #fff"></div>
<div class="a" style="left:993px;top:983px;width:86px;height:16px;border-left:1px solid #a09ea6;border-top:1px solid #a09ea6;border-right:1px solid #fff;border-bottom:1px solid #fff"></div>
<div class="a" style="left:1081px;top:983px;width:108px;height:16px;border-left:1px solid #a09ea6;border-top:1px solid #a09ea6;border-right:1px solid #fff;border-bottom:1px solid #fff"></div>
<div class="a" style="left:1191px;top:983px;width:89px;height:16px;border-left:1px solid #a09ea6;border-top:1px solid #a09ea6;border-right:1px solid #fff;border-bottom:1px solid #fff"></div>
<div class="u" style="left:812px;top:984px">Camera (0.00,0.00,80.00)</div>
<div class="u" style="left:1193px;top:984px">Polys 108</div>
<svg style="left:1266px;top:985px" width="14" height="14"><path d="M13 2 L2 13 M13 6 L6 13 M13 10 L10 13" stroke="#fff" stroke-width="1"/><path d="M14 2 L3 13 M14 6 L7 13 M14 10 L11 13" stroke="#9896a0" stroke-width="1"/></svg>
<!-- TASKBAR -->
<div class="a" style="left:0;top:999px;width:1280px;height:25px;background:linear-gradient(#7a7880 0px,#7a7880 1px,#f4f2f8 1px,#e6e4ea 3px,#d8d6dc 7px,#cac8ce 11px,#aeacb2 14px,#a2a0a6 20px,#8e8c92 22.5px,#222226 23.5px,#141418 25px)"></div>
<svg style="left:0;top:999px" width="110" height="25" viewBox="0 999 110 25">
<defs><linearGradient id="stg" x1="0" y1="0" x2="0" y2="1"><stop offset="0" stop-color="#8e8aa8"/><stop offset="0.15" stop-color="#6e6a88"/><stop offset="0.6" stop-color="#4e4a66"/><stop offset="1" stop-color="#2e2c40"/></linearGradient></defs>
<path d="M0 1000 H100 L91 1024 H0 Z" fill="url(#stg)"/>
<path d="M1 1001 H100" stroke="#a8a4c0" stroke-width="1"/>
<g fill="none" stroke="#fff" stroke-width="1.9" stroke-linecap="butt">
<path d="M25.5 1007.8 H17 Q15 1007.8 15 1009.5 Q15 1011.2 17 1011.2 H23.5 Q25 1011.2 25 1012.8 Q25 1014.4 23.5 1014.4 H14"/>
<path d="M30.5 1006 V1014 Q30.5 1016.5 33.5 1016.8 M28 1008 H34"/>
<path d="M35.5 1007.8 H45.5 V1014.4 H37 Q35.5 1014.4 35.5 1012.8 Q35.5 1011.2 37 1011.2 H45"/>
<path d="M48 1011.2 H57.5 Q60 1011.2 60 1009.5 Q60 1007.8 57.5 1007.8 H51 M51.5 1011.2 L59.5 1016.8"/>
<path d="M63.5 1006 V1014 Q63.5 1016.5 66.5 1016.8 M61 1008 H67.5"/>
</g>
<defs><radialGradient id="scr3" cx="0.35" cy="0.3" r="0.8"><stop offset="0" stop-color="#fff"/><stop offset="0.55" stop-color="#c8c8cc"/><stop offset="1" stop-color="#5a5862"/></radialGradient></defs><circle cx="83.5" cy="1011" r="6" fill="url(#scr3)" stroke="#2a2838" stroke-width="1"/>
<path d="M80.5 1015 L86.5 1007" stroke="#20202a" stroke-width="1.4"/>
</svg>
<svg style="left:110px;top:999px" width="100" height="25" viewBox="110 999 100 25">
<defs><linearGradient id="cdg" x1="0" y1="0" x2="1" y2="1"><stop offset="0" stop-color="#f4f4ff"/><stop offset="0.5" stop-color="#c8c4f0"/><stop offset="1" stop-color="#f0f0ff"/></linearGradient>
<radialGradient id="ieg" cx="0.4" cy="0.35" r="0.7"><stop offset="0" stop-color="#7a9ad8"/><stop offset="1" stop-color="#2a4a88"/></radialGradient></defs>
<circle cx="120.5" cy="1011.5" r="7" fill="url(#cdg)" stroke="#3a3a5a" stroke-width="1.2"/><circle cx="120.5" cy="1011.5" r="1.2" fill="#202030"/>
<path d="M142 1013 L137 1018" stroke="#c89060" stroke-width="3" stroke-linecap="round"/>
<circle cx="147" cy="1008.5" r="4.3" fill="#c8f4ff" stroke="#3a6a88" stroke-width="1.3"/>
<circle cx="169.5" cy="1011.5" r="7" fill="url(#ieg)"/>
<path d="M165 1011.5 H174.5 Q174 1007 169.5 1007 Q165 1007 165 1011.5 Q165 1016 170 1016 Q172.5 1016 174 1014.5" fill="none" stroke="#e8f0ff" stroke-width="1.8"/>
<path d="M192 1008 L195.5 1011.5 L192 1015" fill="none" stroke="#000" stroke-width="1.6"/>
</svg>
<svg style="left:206px;top:1002px" width="18" height="18"><defs><radialGradient id="ffg" cx="0.6" cy="0.35" r="0.7"><stop offset="0" stop-color="#3a7ac8"/><stop offset="1" stop-color="#1a3a78"/></radialGradient><linearGradient id="ffo" x1="0" y1="0" x2="1" y2="1"><stop offset="0" stop-color="#f8c040"/><stop offset="1" stop-color="#d84010"/></linearGradient></defs><circle cx="9" cy="9" r="7.5" fill="url(#ffo)"/><circle cx="10" cy="8" r="4.6" fill="url(#ffg)"/><path d="M9 5 Q12 6 11 9 Q10 11 8 10" fill="#40a8e0" opacity="0.6"/></svg>
<div class="u" style="left:227px;top:1005px;letter-spacing:-0.25px">Mozilla Firefox</div>
<svg style="left:367px;top:1003px" width="16" height="16"><rect x="0.5" y="0.5" width="15" height="15" fill="#fff" stroke="#c03030"/><path d="M2.5 4 Q8 4.5 9 13 M6.5 3 Q12.5 4 13 13" stroke="#b02828" fill="none" stroke-width="1.4"/></svg>
<div class="u" style="left:386px;top:1005px;letter-spacing:-0.2px">mIRC 6.17 with NoNam...</div>
<div class="a" style="left:521px;top:1001px;width:158px;height:20px;background:linear-gradient(#76728e,#5c5874 40%,#4e4a66);border:1px solid #3a3850;border-right-color:#c8c8d0;border-bottom-color:#d8d8e0"></div>
<svg style="left:528px;top:1003px" width="17" height="17" viewBox="0 0 17 17"><rect width="17" height="17" fill="#36b290"/><g stroke="#0a3a30" stroke-width="4.6" stroke-linecap="round" fill="none"><path d="M4.5 12.5 L12.5 4.5 M5 5 L13 13"/></g><circle cx="4" cy="13" r="3.2" fill="#0a3a30"/><circle cx="12.8" cy="4.2" r="3.2" fill="#0a3a30"/><path d="M1.5 4.5 L4.5 1.5 L8 5 L5 8 Z" fill="#0a3a30" stroke="#0a3a30" stroke-width="1.6" stroke-linejoin="round"/><g stroke="#fff" stroke-width="2.6" stroke-linecap="round" fill="none"><path d="M4.5 12.5 L12.5 4.5 M5 5 L13 13"/></g><circle cx="4" cy="13" r="2.4" fill="#fff"/><circle cx="12.8" cy="4.2" r="2.4" fill="#fff"/><path d="M2 4.5 L4.5 2 L7.5 5 L5 7.5 Z" fill="#fff"/><circle cx="3.6" cy="13.4" r="0.9" fill="#0a3a30"/><path d="M13.5 3.5 L15.5 1.5" stroke="#36b290" stroke-width="1.6"/></svg>
<div class="u" style="left:547px;top:1005px;color:#fff;letter-spacing:-0.2px">Untitled - Commando Le...</div>
<div class="u" style="left:1040px;top:1005px;letter-spacing:-0.2px">Desktop</div>
<svg style="left:1088px;top:1006px" width="10" height="10"><path d="M2 1.5 L6 5 L2 8.5" fill="none" stroke="#000" stroke-width="1.6"/></svg>
<svg style="left:1114px;top:999px" width="166" height="25" viewBox="1114 999 166 25">
<defs><linearGradient id="trg" x1="0" y1="0" x2="0" y2="1"><stop offset="0" stop-color="#7a7690"/><stop offset="0.12" stop-color="#5a5670"/><stop offset="0.6" stop-color="#464258"/><stop offset="1" stop-color="#2a283a"/></linearGradient></defs>
<path d="M1116 1004 Q1116 1000 1121 1000 H1280 V1024 H1116 Z" fill="url(#trg)"/>
<path d="M1117 1003 Q1118 1001 1122 1001 H1280" fill="none" stroke="#a8a4c0"/>
<path d="M1124 1003 H1136 V1012 Q1136 1017 1130 1019 Q1124 1017 1124 1012 Z" fill="#2a3aa0" stroke="#c8c8f0" stroke-width="0.8"/><path d="M1126 1006 L1134 1014" stroke="#e0e0ff" stroke-width="1.5"/><circle cx="1125" cy="1018" r="2" fill="#20c020"/>
<circle cx="1148" cy="1011" r="7" fill="#e8c820" stroke="#a08010"/><circle cx="1148" cy="1011" r="2" fill="#806010"/>
<rect x="1158" y="1002" width="17" height="17" fill="#6a6898" stroke="#9a98c8"/><path d="M1162 1013 V1010 Q1166.5 1003 1171 1010 V1013" fill="none" stroke="#fff" stroke-width="1.6"/><rect x="1161" y="1011" width="3" height="5" fill="#fff"/><rect x="1169" y="1011" width="3" height="5" fill="#fff"/>
<path d="M1186 1004 Q1176 1010 1184 1019" fill="none" stroke="#10a0a0" stroke-width="3.5"/><circle cx="1188" cy="1004" r="2.5" fill="#d02040"/><circle cx="1185" cy="1013" r="2" fill="#103050"/>
<circle cx="1202" cy="1008" r="3.5" fill="#f0b090"/><path d="M1196 1019 Q1196 1012 1202 1012 Q1208 1012 1208 1019 Z" fill="#f0c0a0"/>
<text x="1222" y="1016" font-family="Liberation Sans" font-weight="bold" font-size="12" fill="#fff">6:50 PM</text>
</svg>
<!-- DIALOG -->
<div class="a" style="left:896px;top:284px;width:2px;height:435px;background:rgba(40,60,90,0.25)"></div>
<div class="a" style="left:387px;top:717px;width:511px;height:2px;background:rgba(40,60,90,0.25)"></div>
<div class="a" style="left:384px;top:281px;width:512px;height:436px;background:#cecbd2;border:1px solid #6e6c78;border-right-color:#5a5e6c;border-bottom-color:#5a5e6c"></div>
<div class="a" style="left:385px;top:305px;width:510px;height:411px;border-left:1px solid #dedce2;border-right:1px solid #e6e4ea;border-bottom:1px solid #e6e4ea"></div>
<div class="a" style="left:389px;top:309px;width:1px;height:400px;background:#d8d6dc"></div>
<svg style="left:384px;top:281px" width="512" height="24" viewBox="384 281 512 24">
<defs><linearGradient id="dtg" x1="0" y1="0" x2="0" y2="1"><stop offset="0" stop-color="#54526a"/><stop offset="0.06" stop-color="#aeaac4"/><stop offset="0.35" stop-color="#7e7a98"/><stop offset="0.75" stop-color="#56526c"/><stop offset="1" stop-color="#46445a"/></linearGradient>
<radialGradient id="scr2" cx="0.35" cy="0.3" r="0.8"><stop offset="0" stop-color="#fff"/><stop offset="0.55" stop-color="#c8c8cc"/><stop offset="1" stop-color="#5a5862"/></radialGradient></defs>
<rect x="384" y="281" width="512" height="24" fill="#cecbd2"/>
<rect x="384" y="281" width="512" height="1" fill="#54526a"/>
<path d="M384 281 H812 L801 305 H384 Z" fill="url(#dtg)"/>
<circle cx="794" cy="293" r="6" fill="url(#scr2)" stroke="#3a3848" stroke-width="0.8"/>
<path d="M791 296.5 L797 289.5" stroke="#202028" stroke-width="1.4"/>
<path d="M879 292 L885 299 M885 292 L879 299" stroke="#000" stroke-width="2"/>
</svg>
<div class="u" style="left:391px;top:288px;font-size:12px;font-weight:bold;color:#fff;letter-spacing:0;line-height:15px;text-shadow:1px 1px 0 rgba(30,28,40,0.5)">Missing Presets</div>
<svg style="left:400px;top:312px" width="30" height="40" viewBox="400 312 30 40" shape-rendering="crispEdges">
<defs><linearGradient id="iy" x1="0" y1="0" x2="1" y2="1"><stop offset="0" stop-color="#ffff80"/><stop offset="1" stop-color="#a0a000"/></linearGradient>
<linearGradient id="ir" x1="0" y1="0" x2="1" y2="1"><stop offset="0" stop-color="#ff8080"/><stop offset="1" stop-color="#a00000"/></linearGradient>
<linearGradient id="ig" x1="0" y1="0" x2="1" y2="1"><stop offset="0" stop-color="#80ff80"/><stop offset="1" stop-color="#00a000"/></linearGradient></defs>
<rect x="404" y="316" width="10" height="10" fill="#000"/><rect x="405" y="317" width="8" height="8" fill="url(#iy)"/>
<rect x="408" y="326" width="2" height="16" fill="#000"/><rect x="408" y="330" width="7" height="2" fill="#000"/><rect x="408" y="340" width="7" height="2" fill="#000"/>
<rect x="414" y="326" width="10" height="10" fill="#000"/><rect x="415" y="327" width="8" height="8" fill="url(#ir)"/>
<rect x="414" y="338" width="10" height="10" fill="#000"/><rect x="415" y="339" width="8" height="8" fill="url(#ig)"/>
</svg>
<div class="t" style="left:449px;top:316px;transform:scaleX(0.886)">The following objects were removed from the level because their preset could not be found.</div>
<div class="t" style="left:449px;top:329px;transform:scaleX(0.886)">You can remap these objects to a different preset by double-clicking its entry in the list</div>
<div class="t" style="left:449px;top:342px;transform:scaleX(0.886)">below.&nbsp; Where possible, a best guess is entered by default.</div>
<div class="t" style="left:398px;top:364px">Removed Object List:</div>
<div class="a" style="left:398px;top:381px;width:486px;height:288px;border-left:1px solid #8a8890;border-top:1px solid #8a8890;border-right:1px solid #fff;border-bottom:1px solid #fff"></div>
<div class="a" style="left:399px;top:382px;width:484px;height:286px;background:#fff;border-left:1px solid #5a5860;border-top:1px solid #5a5860;border-right:1px solid #dedce2;border-bottom:1px solid #dedce2"></div>
<div class="a" style="left:400px;top:383px;width:466px;height:16px;background:#cecbd2;border-bottom:1px solid #8a8890"></div>
<div class="a" style="left:630px;top:384px;width:1px;height:14px;background:#a09ea6"></div><div class="a" style="left:631px;top:384px;width:1px;height:14px;background:#fff"></div>
<div class="a" style="left:862px;top:384px;width:1px;height:14px;background:#a09ea6"></div><div class="a" style="left:863px;top:384px;width:1px;height:14px;background:#fff"></div>
<div class="t" style="left:407px;top:385px">Object</div>
<div class="t" style="left:638px;top:385px">Preset</div>
<div class="t" style="left:404px;top:402px">Default.1300000564</div>
<div class="t" style="left:404px;top:416px">Default.1300000563</div>
<div class="t" style="left:404px;top:430px">Default.1300000562</div>
<div class="t" style="left:404px;top:444px">Default.1300000561</div>
<div class="t" style="left:404px;top:458px">Default.1300000560</div>
<div class="t" style="left:404px;top:472px">Default.1300000559</div>
<div class="t" style="left:404px;top:486px">Default.1300000558</div>
<div class="t" style="left:404px;top:500px">Default.1300000557</div>
<div class="t" style="left:404px;top:514px">Default.1300000556</div>
<div class="t" style="left:404px;top:528px">Default.1300000555</div>
<div class="t" style="left:404px;top:542px">Default.1300000554</div>
<div class="t" style="left:404px;top:556px">Default.1300000553</div>
<div class="t" style="left:404px;top:570px">Default.1300000552</div>
<div class="t" style="left:404px;top:584px">Default.1300000551</div>
<div class="t" style="left:404px;top:598px">Default.1300000550</div>
<div class="t" style="left:404px;top:612px">Default.1300000549</div>
<div class="t" style="left:404px;top:626px">Default.1300000548</div>
<div class="t" style="left:404px;top:640px">Default.1300000547</div>
<div class="t" style="left:404px;top:654px">Default.1300000546</div>
<svg style="left:866px;top:383px" width="16" height="284" viewBox="866 383 16 284">
<defs><linearGradient id="sb2" x1="0" y1="0" x2="1" y2="0"><stop offset="0" stop-color="#c4c2c8"/><stop offset="0.45" stop-color="#f4f4f6"/><stop offset="0.7" stop-color="#c0bec6"/><stop offset="1" stop-color="#a4a2aa"/></linearGradient>
<linearGradient id="sbt2" x1="0" y1="0" x2="1" y2="0"><stop offset="0" stop-color="#dcdce2"/><stop offset="0.5" stop-color="#f6f6f8"/><stop offset="1" stop-color="#e0e0e6"/></linearGradient></defs>
<rect x="866" y="383" width="16" height="284" fill="url(#sbt2)"/>
<rect x="866" y="383" width="1" height="284" fill="#8a8890"/>
<rect x="866.5" y="383.5" width="15" height="16" fill="url(#sb2)" stroke="#8a8890"/>
<rect x="867" y="400" width="14" height="8" fill="url(#sb2)"/><rect x="867" y="407" width="14" height="1" fill="#9a98a0"/>
<rect x="866.5" y="650.5" width="15" height="16" fill="url(#sb2)" stroke="#8a8890"/>
<path d="M870.5 394 L874 390.5 L877.5 394" fill="none" stroke="#101018" stroke-width="1.6"/>
<path d="M870.5 656 L874 659.5 L877.5 656" fill="none" stroke="#101018" stroke-width="1.6"/>
</svg>
<svg style="left:820px;top:410px" width="50" height="50" viewBox="820 410 50 50">
<defs><filter id="csh" x="-50%" y="-50%" width="200%" height="200%"><feGaussianBlur stdDeviation="2.2"/></filter>
<linearGradient id="cg" x1="0" y1="0" x2="1" y2="0"><stop offset="0" stop-color="#8aa0d0"/><stop offset="0.5" stop-color="#3a4a78"/><stop offset="1" stop-color="#1a2240"/></linearGradient></defs>
<path d="M832 423 L840 431 L853 441 L840 441 L832 451 Z" fill="#000" opacity="0.35" filter="url(#csh)"/>
<path d="M838 426 L851 438 H838 Z" fill="#fff" stroke="#888" stroke-width="1"/>
<path d="M829 417 L838 425 V438 L829 446 Z" fill="url(#cg)" stroke="#101828" stroke-width="1"/>
</svg>
<div class="a" style="left:545px;top:680px;width:75px;height:23px;border:1px solid #000"></div>
<div class="a" style="left:546px;top:681px;width:73px;height:21px;background:#cecbd2;border-left:1px solid #fff;border-top:1px solid #fff;border-right:1px solid #404048;border-bottom:1px solid #404048"></div>
<div class="a" style="left:547px;top:682px;width:71px;height:19px;border-right:1px solid #8a8890;border-bottom:1px solid #8a8890"></div>
<div class="t" style="left:545px;top:684px;width:75px;text-align:center;transform-origin:50% 0">OK</div>
<div class="a" style="left:659px;top:680px;width:75px;height:23px;background:#cecbd2;border-left:1px solid #fff;border-top:1px solid #fff;border-right:1px solid #404048;border-bottom:1px solid #404048"></div>
<div class="a" style="left:660px;top:681px;width:73px;height:21px;border-right:1px solid #8a8890;border-bottom:1px solid #8a8890"></div>
<div class="t" style="left:659px;top:684px;width:75px;text-align:center;transform-origin:50% 0">Cancel</div>
</body></html>
